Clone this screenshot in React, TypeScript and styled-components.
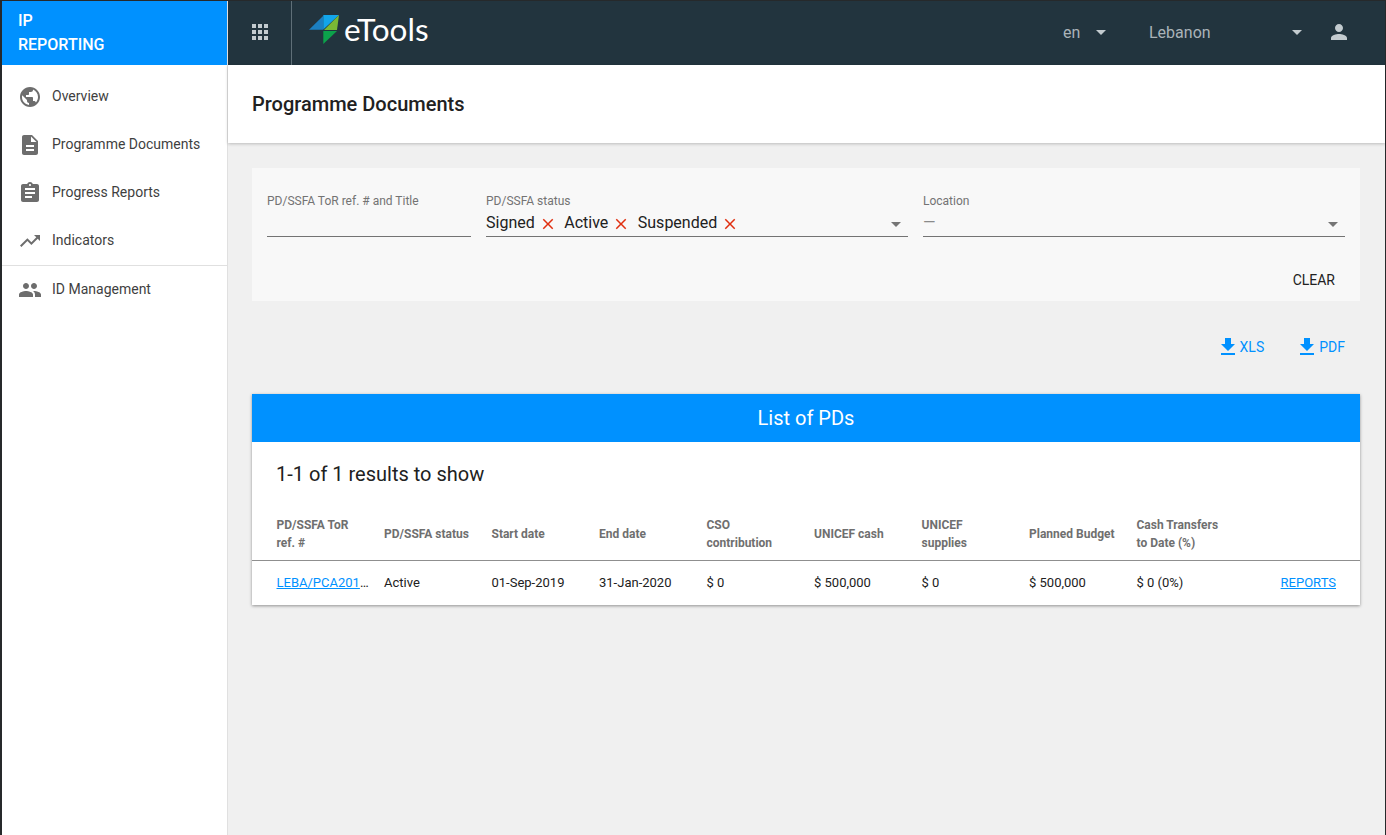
import React from 'react'
import styled, { createGlobalStyle } from 'styled-components'

const GlobalStyle = createGlobalStyle`
  html, body {
    margin: 0;
    height: 100%;
    overflow: hidden;
  }
  body {
    font-family: Roboto, "Liberation Sans", sans-serif;
    color: #212121;
  }
`

const Frame = styled.div`
  display: flex;
  width: 1386px;
  height: 835px;
  box-sizing: border-box;
  padding: 1px 1px 0 2px;
  background: #26292b;
`

const Sidebar = styled.aside`
  flex: 0 0 225px;
  display: flex;
  flex-direction: column;
  background: #fff;
  border-right: 1px solid #e0e0e0;
`

const Brand = styled.div`
  height: 64px;
  flex: none;
  box-sizing: border-box;
  padding: 8px 16px 0;
  background: #0091ff;
  color: #fff;
  font-size: 16px;
  font-weight: 500;
  line-height: 24px;
`

const Nav = styled.nav`
  display: flex;
  flex-direction: column;
  padding-top: 7px;
`

const NavItem = styled.div<{ $short?: boolean }>`
  display: flex;
  align-items: center;
  height: ${({ $short }) => ($short ? 46 : 48)}px;
  padding-left: 16px;
  font-size: 14px;
  color: #3f3f3f;
  svg {
    flex: none;
    margin-right: 10px;
    margin-top: 1px;
    fill: #6d6d6d;
  }
`

const NavDivider = styled.div`
  height: 1px;
  background: #e0e0e0;
  margin: 1px 0 0;
`

const Column = styled.div`
  flex: 1;
  min-width: 0;
  display: flex;
  flex-direction: column;
  background: #f0f0f0;
`

const TopBar = styled.header`
  height: 64px;
  flex: none;
  box-sizing: border-box;
  padding-bottom: 2px;
  display: flex;
  align-items: center;
  background: #22343e;
  color: #aab3b8;
`

const AppsButton = styled.div`
  width: 64px;
  height: 64px;
  margin-bottom: -2px;
  padding-bottom: 2px;
  box-sizing: border-box;
  display: flex;
  align-items: center;
  justify-content: center;
  border-right: 1px solid #5f6f78;
  svg {
    fill: #c3cbcf;
  }
`

const Logo = styled.div`
  display: flex;
  align-items: center;
  margin-left: 17px;
  margin-top: -6px;
  svg {
    margin-right: 5px;
  }
`

const LogoText = styled.span`
  color: #fff;
  font-family: Lato, Roboto, sans-serif;
  font-size: 31.5px;
  font-weight: 400;
  line-height: 36px;
`

const TopSpacer = styled.div`
  flex: 1;
`

const TopGap = styled.div`
  flex: 0 0 36px;
`

const TopSelect = styled.div<{ $width: number }>`
  display: flex;
  align-items: center;
  justify-content: space-between;
  width: ${({ $width }) => $width}px;
  font-size: 16px;
  svg {
    fill: #c3cbcf;
  }
`

const TopUser = styled.div`
  display: flex;
  margin: 0 34px 0 18px;
  svg {
    fill: #c3cbcf;
  }
`

const TitleBar = styled.div`
  height: 78px;
  flex: none;
  display: flex;
  align-items: center;
  padding-left: 24px;
  background: #fff;
  box-shadow: 0 1px 3px rgba(0, 0, 0, 0.22);
  font-size: 20px;
  font-weight: 500;
`

const Content = styled.main`
  flex: 1;
  padding: 25px 25px 0 24px;
`

const FilterPanel = styled.section`
  height: 133px;
  box-sizing: border-box;
  padding: 25px 15px 0;
  background: #f8f8f8;
  display: flex;
  flex-direction: column;
`

const FilterRow = styled.div`
  display: grid;
  grid-template-columns: 204px 422px 422px;
  column-gap: 15px;
`

const Field = styled.div`
  height: 44px;
  box-sizing: border-box;
  border-bottom: 1px solid #737373;
  position: relative;
`

const FieldLabel = styled.div`
  font-size: 12px;
  line-height: 16px;
  color: #737373;
`

const FieldValue = styled.div`
  display: flex;
  align-items: center;
  height: 24px;
  margin-top: 1px;
  font-size: 16px;
  color: #212121;
`

const Placeholder = styled.span`
  color: #8a8a8a;
`

const Chip = styled.span`
  display: inline-flex;
  align-items: center;
  margin-right: 7.5px;
  svg {
    fill: #e02f10;
    margin-left: 4px;
    margin-top: 3px;
  }
`

const Caret = styled.span`
  position: absolute;
  right: 0;
  top: 19px;
  display: flex;
  svg {
    fill: #757575;
  }
`

const ClearRow = styled.div`
  display: flex;
  justify-content: flex-end;
  margin-top: 33px;
  padding-right: 10px;
  font-size: 14px;
  line-height: 20px;
  color: #212121;
`

const ExportRow = styled.div`
  display: flex;
  justify-content: flex-end;
  gap: 31px;
  padding: 34px 15px 0 0;
  height: 59px;
  box-sizing: content-box;
`

const ExportLink = styled.span`
  display: flex;
  align-items: center;
  height: 24px;
  color: #0091ff;
  font-size: 14px;
  svg {
    fill: #0091ff;
  }
`

const Card = styled.section`
  background: #fff;
  box-shadow: 0 1px 3px rgba(0, 0, 0, 0.4);
`

const CardHeader = styled.div`
  height: 48px;
  display: flex;
  align-items: center;
  justify-content: center;
  background: #0091ff;
  color: #fff;
  font-size: 20px;
`

const Results = styled.div`
  padding: 20px 24px 0;
  font-size: 20px;
  line-height: 24px;
  color: #212121;
`

const Table = styled.div`
  margin-top: 24px;
`

const TableRow = styled.div<{ $head?: boolean }>`
  display: grid;
  grid-template-columns: repeat(9, 107.5px) 1fr;
  align-items: center;
  box-sizing: border-box;
  height: ${({ $head }) => ($head ? 51 : 44)}px;
  padding: 0 24px 2px 24.5px;
  border-bottom: ${({ $head }) => ($head ? '1px solid #8f8f8f' : 'none')};
`

const HeadCell = styled.div`
  font-size: 12px;
  font-weight: 700;
  line-height: 18px;
  color: #6f6f6f;
  padding-right: 8px;
`

const Cell = styled.div`
  font-size: 13px;
  color: #212121;
  padding-right: 8px;
  white-space: nowrap;
`

const ActionCell = styled(Cell)`
  padding-right: 0;
  text-align: right;
`

const LinkText = styled.a`
  color: #0091ff;
  text-decoration: underline;
`

function Icon({ d, size = 24 }: { d: string; size?: number }) {
  return (
    <svg width={size} height={size} viewBox="0 0 24 24">
      <path d={d} />
    </svg>
  )
}

const icons = {
  apps: 'M4 8h4V4H4v4zm6 12h4v-4h-4v4zm-6 0h4v-4H4v4zm0-6h4v-4H4v4zm6 0h4v-4h-4v4zm6-10v4h4V4h-4zm-6 4h4V4h-4v4zm6 6h4v-4h-4v4zm0 6h4v-4h-4v4z',
  globe:
    'M12 2C6.48 2 2 6.48 2 12s4.48 10 10 10 10-4.48 10-10S17.52 2 12 2zm-1 17.93c-3.95-.49-7-3.85-7-7.93 0-.62.08-1.21.21-1.79L9 15v1c0 1.1.9 2 2 2v1.93zm6.9-2.54c-.26-.81-1-1.39-1.9-1.39h-1v-3c0-.55-.45-1-1-1H8v-2h2c.55 0 1-.45 1-1V7h2c1.1 0 2-.9 2-2v-.41c2.93 1.19 5 4.06 5 7.41 0 2.08-.8 3.97-2.1 5.39z',
  doc: 'M14 2H6c-1.1 0-1.99.9-1.99 2L4 20c0 1.1.89 2 1.99 2H18c1.1 0 2-.9 2-2V8l-6-6zm2 16H8v-2h8v2zm0-4H8v-2h8v2zm-3-5V3.5L18.5 9H13z',
  clipboard:
    'M19 3h-4.18C14.4 1.84 13.3 1 12 1c-1.3 0-2.4.84-2.82 2H5c-1.1 0-2 .9-2 2v14c0 1.1.9 2 2 2h14c1.1 0 2-.9 2-2V5c0-1.1-.9-2-2-2zm-7 0c.55 0 1 .45 1 1s-.45 1-1 1-1-.45-1-1 .45-1 1-1zm2 14H7v-2h7v2zm3-4H7v-2h10v2zm0-4H7V7h10v2z',
  trend: 'M16 6l2.29 2.29-4.88 4.88-4-4L2 16.59 3.41 18l6-6 4 4 6.3-6.29L22 12V6z',
  people:
    'M16 11c1.66 0 2.99-1.34 2.99-3S17.66 5 16 5c-1.66 0-3 1.34-3 3s1.34 3 3 3zm-8 0c1.66 0 2.99-1.34 2.99-3S9.66 5 8 5C6.34 5 5 6.34 5 8s1.34 3 3 3zm0 2c-2.33 0-7 1.17-7 3.5V19h14v-2.5c0-2.33-4.67-3.5-7-3.5zm8 0c-.29 0-.62.02-.97.05 1.16.84 1.97 1.97 1.97 3.45V19h6v-2.5c0-2.33-4.67-3.5-7-3.5z',
  person:
    'M12 12c2.21 0 4-1.79 4-4s-1.79-4-4-4-4 1.79-4 4 1.79 4 4 4zm0 2c-2.67 0-8 1.34-8 4v2h16v-2c0-2.66-5.33-4-8-4z',
  download: 'M19 9h-4V3H9v6H5l7 7 7-7zM5 18v2h14v-2H5z',
  close:
    'M19 6.41L17.59 5 12 10.59 6.41 5 5 6.41 10.59 12 5 17.59 6.41 19 12 13.41 17.59 19 19 17.59 13.41 12z',
  caret: 'M7 10l5 5 5-5z',
}

const columns: React.ReactNode[] = [
  <>PD/SSFA ToR<br />ref. #</>,
  'PD/SSFA status',
  'Start date',
  'End date',
  <>CSO<br />contribution</>,
  'UNICEF cash',
  <>UNICEF<br />supplies</>,
  'Planned Budget',
  <>Cash Transfers<br />to Date (%)</>,
  '',
]

const values = ['Active', '01-Sep-2019', '31-Jan-2020', '$ 0', '$ 500,000', '$ 0', '$ 500,000', '$ 0 (0%)']

export default function App() {
  return (
    <Frame>
      <GlobalStyle />
      <Sidebar>
        <Brand>
          IP
          <br />
          REPORTING
        </Brand>
        <Nav>
          <NavItem><Icon d={icons.globe} />Overview</NavItem>
          <NavItem><Icon d={icons.doc} />Programme Documents</NavItem>
          <NavItem><Icon d={icons.clipboard} />Progress Reports</NavItem>
          <NavItem><Icon d={icons.trend} />Indicators</NavItem>
          <NavDivider />
          <NavItem $short><Icon d={icons.people} />ID Management</NavItem>
        </Nav>
      </Sidebar>
      <Column>
        <TopBar>
          <AppsButton><Icon d={icons.apps} /></AppsButton>
          <Logo>
            <svg width="30" height="30" viewBox="0 0 30 30">
              <path d="M0 15.7 14.3 1.7V15.7Z" fill="#1c7fc0" />
              <path d="M14.3 1H30L14.3 15.5Z" fill="#12a5ea" />
              <path d="M30 1 28 16H15Z" fill="#7ab835" />
              <path d="M14.3 30V17H28Z" fill="#0ca24b" />
            </svg>
            <LogoText>eTools</LogoText>
          </Logo>
          <TopSpacer />
          <TopSelect $width={50}>en<Icon d={icons.caret} /></TopSelect>
          <TopGap />
          <TopSelect $width={160}>Lebanon<Icon d={icons.caret} /></TopSelect>
          <TopUser><Icon d={icons.person} /></TopUser>
        </TopBar>
        <TitleBar>Programme Documents</TitleBar>
        <Content>
          <FilterPanel>
            <FilterRow>
              <Field>
                <FieldLabel>PD/SSFA ToR ref. # and Title</FieldLabel>
              </Field>
              <Field>
                <FieldLabel>PD/SSFA status</FieldLabel>
                <FieldValue>
                  <Chip>Signed<Icon d={icons.close} size={18} /></Chip>
                  <Chip>Active<Icon d={icons.close} size={18} /></Chip>
                  <Chip>Suspended<Icon d={icons.close} size={18} /></Chip>
                </FieldValue>
                <Caret><Icon d={icons.caret} /></Caret>
              </Field>
              <Field>
                <FieldLabel>Location</FieldLabel>
                <FieldValue><Placeholder>—</Placeholder></FieldValue>
                <Caret><Icon d={icons.caret} /></Caret>
              </Field>
            </FilterRow>
            <ClearRow>CLEAR</ClearRow>
          </FilterPanel>
          <ExportRow>
            <ExportLink><Icon d={icons.download} />XLS</ExportLink>
            <ExportLink><Icon d={icons.download} />PDF</ExportLink>
          </ExportRow>
          <Card>
            <CardHeader>List of PDs</CardHeader>
            <Results>1-1 of 1 results to show</Results>
            <Table>
              <TableRow $head>
                {columns.map((col, i) => (
                  <HeadCell key={i}>{col}</HeadCell>
                ))}
              </TableRow>
              <TableRow>
                <Cell><LinkText>LEBA/PCA201</LinkText>…</Cell>
                {values.map((val, i) => (
                  <Cell key={i}>{val}</Cell>
                ))}
                <ActionCell><LinkText>REPORTS</LinkText></ActionCell>
              </TableRow>
            </Table>
          </Card>
        </Content>
      </Column>
    </Frame>
  )
}
